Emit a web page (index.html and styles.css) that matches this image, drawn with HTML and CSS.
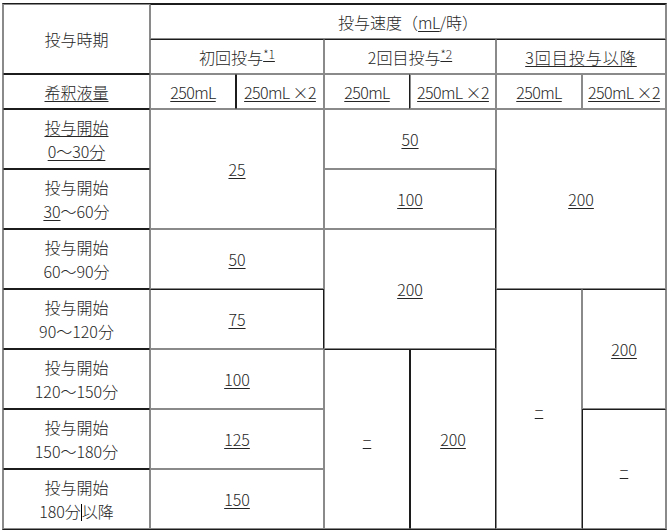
FILE: index.html
```html
<!DOCTYPE html>
<html lang="ja">
<head>
<meta charset="utf-8">
<title>投与速度</title>
<link rel="stylesheet" href="styles.css">
</head>
<body>
<table class="dose">
  <colgroup>
    <col class="c-lead">
    <col class="c-a">
    <col class="c-b">
    <col class="c-a">
    <col class="c-a">
    <col class="c-a">
    <col class="c-c">
  </colgroup>
  <tr class="hr">
    <th rowspan="2" class="lead dk-b">投与時期</th>
    <th colspan="6" class="dk-t">投与速度（<u class="lat">mL</u>/時）</th>
  </tr>
  <tr class="hr">
    <th colspan="2" class="dk-t">初回投与<sup><u>*1</u></sup></th>
    <th colspan="2" class="dk-t">2回目投与<sup><u>*2</u></sup></th>
    <th colspan="2" class="dk-t"><u class="wide">3回目投与以降</u></th>
  </tr>
  <tr class="hr">
    <th class="lead dk-t dk-b"><u>希釈液量</u></th>
    <td class="dk-r"><u class="lat">250mL</u></td>
    <td class="dk-l"><u class="lat">250mL ×2</u></td>
    <td class="dk-r"><u class="lat">250mL</u></td>
    <td><u class="lat">250mL ×2</u></td>
    <td><u class="lat">250mL</u></td>
    <td><u class="lat">250mL ×2</u></td>
  </tr>
  <tr class="dr">
    <th class="lead dk-t dk-b"><u>投与開始</u><br><u>0〜30分</u></th>
    <td colspan="2" rowspan="2"><u>25</u></td>
    <td colspan="2"><u>50</u></td>
    <td colspan="2" rowspan="3"><u>200</u></td>
  </tr>
  <tr class="dr">
    <th class="lead dk-t dk-b">投与開始<br><u>30</u>〜60分</th>
    <td colspan="2" class="dk-r"><u>100</u></td>
  </tr>
  <tr class="dr">
    <th class="lead dk-t dk-b">投与開始<br>60〜90分</th>
    <td colspan="2"><u>50</u></td>
    <td colspan="2" rowspan="2" class="dk-r"><u>200</u></td>
  </tr>
  <tr class="dr">
    <th class="lead dk-t dk-b">投与開始<br>90〜120分</th>
    <td colspan="2" class="dk-t dk-r"><u>75</u></td>
    <td rowspan="4" class="dk-t"><u>−</u></td>
    <td rowspan="2" class="dk-t"><u>200</u></td>
  </tr>
  <tr class="dr">
    <th class="lead dk-t dk-b">投与開始<br>120〜150分</th>
    <td colspan="2"><u>100</u></td>
    <td rowspan="3" class="dk-t dk-r"><u>−</u></td>
    <td rowspan="3" class="dk-t dk-l dk-r"><u>200</u></td>
  </tr>
  <tr class="dr">
    <th class="lead dk-t dk-b">投与開始<br>150〜180分</th>
    <td colspan="2"><u>125</u></td>
    <td rowspan="2" class="dk-t dk-l"><u>−</u></td>
  </tr>
  <tr class="dr">
    <th class="lead dk-t">投与開始<br>180分<span class="caret"></span>以降</th>
    <td colspan="2"><u>150</u></td>
  </tr>
</table>
</body>
</html>
```

FILE: styles.css
```css
html, body {
  margin: 0;
  padding: 0;
  background: #ffffff;
}

.dose {
  margin: 3px 0 0 2px;
  width: 665px;
  table-layout: fixed;
  border-collapse: separate;
  border-spacing: 0;
  border-style: solid;
  border-width: 1px;
  border-color: #1c1c1c #8a8a8a #1c1c1c #8a8a8a;
  font-family: "Noto Sans CJK JP", "Noto Sans", sans-serif;
  font-size: 16px;
  font-weight: 300;
  color: #262626;
}

.c-lead { width: 147px; }
.c-a { width: 86px; }
.c-b { width: 88px; }
.c-c { width: 84px; }

.dose th,
.dose td {
  border: 1px solid #8a8a8a;
  padding: 0;
  text-align: center;
  vertical-align: middle;
  font-weight: 300;
  line-height: 24px;
  white-space: nowrap;
}

.hr { height: 35px; }
.dr { height: 60px; }

.dose .dk-t { border-top-color: #1c1c1c; }
.dose .dk-b { border-bottom-color: #1c1c1c; }
.dose .dk-l { border-left-color: #1c1c1c; }
.dose .dk-r { border-right-color: #1c1c1c; }

.dose u {
  text-decoration: underline;
  text-underline-offset: 2px;
}

.lat { letter-spacing: -0.6px; }

.wide { letter-spacing: 1px; }

.dose sup {
  font-size: 12px;
  line-height: 0;
  vertical-align: 5px;
}

.caret {
  display: inline-block;
  width: 1px;
  height: 17px;
  background: #000000;
  vertical-align: -3px;
}
```
